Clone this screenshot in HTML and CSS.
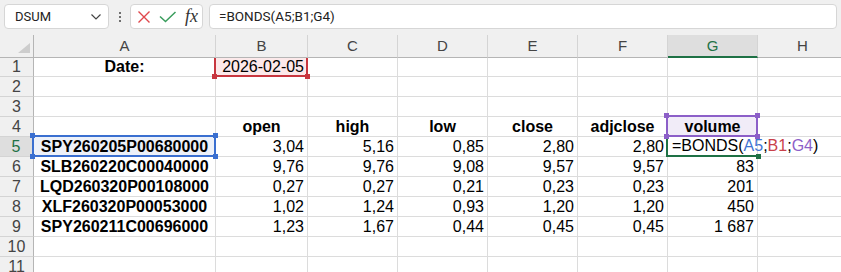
FILE: index.html
```html
<!DOCTYPE html>
<html>
<head>
<meta charset="utf-8">
<link rel="stylesheet" href="styles.css">
</head>
<body>
<div class="toolbar">
  <div class="namebox">
    <span class="nb-text">DSUM</span>
    <svg class="chev" width="12" height="8" viewBox="0 0 12 8"><path d="M1.5 1.5 L6 6 L10.5 1.5" fill="none" stroke="#444" stroke-width="1.2"/></svg>
  </div>
  <div class="dots"><span></span><span></span><span></span></div>
  <div class="actions">
    <svg class="ic-x" width="14" height="14" viewBox="0 0 14 14"><path d="M1.5 1.5 L12.5 12.5 M12.5 1.5 L1.5 12.5" stroke="#e0474c" stroke-width="1.4" fill="none"/></svg>
    <svg class="ic-ok" width="18" height="12" viewBox="0 0 18 12"><path d="M1 5.5 L6.5 10.5 L16.5 1" stroke="#3a9d5d" stroke-width="1.5" fill="none"/></svg>
    <span class="fx">fx</span>
  </div>
  <div class="formula">=BONDS(A5;B1;G4)</div>
</div>

<div class="colheads">
  <div class="ch corner"><svg class="tri" width="12" height="10" viewBox="0 0 12 10"><polygon points="12,0 12,10 0,10" fill="#cdcdcd"/></svg></div>
  <div class="ch">A</div>
  <div class="ch">B</div>
  <div class="ch">C</div>
  <div class="ch">D</div>
  <div class="ch">E</div>
  <div class="ch">F</div>
  <div class="ch sel">G</div>
  <div class="ch">H</div>
</div>

<div class="body">
  <div class="grid">
    <div class="rh">1</div><div class="c b">Date:</div><div class="c n hl-red">2026-02-05</div><div class="c"></div><div class="c"></div><div class="c"></div><div class="c"></div><div class="c"></div><div class="c"></div>
    <div class="rh">2</div><div class="c"></div><div class="c"></div><div class="c"></div><div class="c"></div><div class="c"></div><div class="c"></div><div class="c"></div><div class="c"></div>
    <div class="rh">3</div><div class="c"></div><div class="c"></div><div class="c"></div><div class="c"></div><div class="c"></div><div class="c"></div><div class="c"></div><div class="c"></div>
    <div class="rh">4</div><div class="c"></div><div class="c b">open</div><div class="c b">high</div><div class="c b">low</div><div class="c b">close</div><div class="c b">adjclose</div><div class="c b hl-purple">volume</div><div class="c"></div>
    <div class="rh sel">5</div><div class="c b hl-blue">SPY260205P00680000</div><div class="c n">3,04</div><div class="c n">5,16</div><div class="c n">0,85</div><div class="c n">2,80</div><div class="c n">2,80</div><div class="c"></div><div class="c"></div>
    <div class="rh">6</div><div class="c b">SLB260220C00040000</div><div class="c n">9,76</div><div class="c n">9,76</div><div class="c n">9,08</div><div class="c n">9,57</div><div class="c n">9,57</div><div class="c n">83</div><div class="c"></div>
    <div class="rh">7</div><div class="c b">LQD260320P00108000</div><div class="c n">0,27</div><div class="c n">0,27</div><div class="c n">0,21</div><div class="c n">0,23</div><div class="c n">0,23</div><div class="c n">201</div><div class="c"></div>
    <div class="rh">8</div><div class="c b">XLF260320P00053000</div><div class="c n">1,02</div><div class="c n">1,24</div><div class="c n">0,93</div><div class="c n">1,20</div><div class="c n">1,20</div><div class="c n">450</div><div class="c"></div>
    <div class="rh">9</div><div class="c b">SPY260211C00696000</div><div class="c n">1,23</div><div class="c n">1,67</div><div class="c n">0,44</div><div class="c n">0,45</div><div class="c n">0,45</div><div class="c n">1 687</div><div class="c"></div>
    <div class="rh">10</div><div class="c"></div><div class="c"></div><div class="c"></div><div class="c"></div><div class="c"></div><div class="c"></div><div class="c"></div><div class="c"></div>
    <div class="rh">11</div><div class="c"></div><div class="c"></div><div class="c"></div><div class="c"></div><div class="c"></div><div class="c"></div><div class="c"></div><div class="c"></div>
  </div>

  <div class="editor"><span>=BONDS(</span><span class="t-blue">A5</span><span>;</span><span class="t-red">B1</span><span>;</span><span class="t-purple">G4</span><span>)</span><i class="handle"></i></div>

  <div class="ref ref-red"><i class="k tl"></i><i class="k tr"></i><i class="k bl"></i><i class="k br"></i></div>
  <div class="ref ref-blue"><i class="k tl"></i><i class="k tr"></i><i class="k bl"></i><i class="k br"></i></div>
  <div class="ref ref-purple"><i class="k tl"></i><i class="k tr"></i><i class="k bl"></i><i class="k br"></i></div>
</div>
</body>
</html>
```
FILE: styles.css
```css
html, body {
  margin: 0;
  padding: 0;
}
body {
  width: 841px;
  height: 272px;
  overflow: hidden;
  background: #ffffff;
  font-family: "Liberation Sans", Arial, sans-serif;
  color: #000;
}

/* ---------- toolbar ---------- */
.toolbar {
  height: 35px;
  box-sizing: border-box;
  background: #f0f0f0;
  display: flex;
  align-items: flex-start;
  padding: 4px 4px 0 4px;
}
.namebox {
  width: 105px;
  height: 25px;
  box-sizing: border-box;
  background: #fff;
  border: 1px solid #d6d6d6;
  border-radius: 4px;
  display: flex;
  align-items: center;
  padding-left: 10px;
  padding-right: 6px;
  font-family: Roboto, "Liberation Sans", sans-serif;
  font-size: 13px;
  color: #222;
}
.nb-text { flex: 1; }
.chev { display: block; }
.dots {
  width: 21px;
  height: 25px;
  display: flex;
  flex-direction: column;
  align-items: center;
  justify-content: center;
  gap: 2px;
}
.dots span {
  width: 2px;
  height: 2px;
  border-radius: 1px;
  background: #444;
}
.actions {
  width: 73px;
  height: 25px;
  box-sizing: border-box;
  background: #fff;
  border: 1px solid #d6d6d6;
  border-radius: 4px;
  display: flex;
  align-items: center;
  padding-left: 6px;
}
.ic-x { display: block; margin-right: 8px; }
.ic-ok { display: block; margin-right: 8px; margin-top: 1px; }
.fx {
  font-family: "Liberation Serif", "Times New Roman", serif;
  font-style: italic;
  font-size: 18px;
  color: #333;
  line-height: 1;
  margin-top: -2px;
}
.formula {
  flex: 1;
  margin-left: 6px;
  height: 25px;
  box-sizing: border-box;
  background: #fff;
  border: 1px solid #d6d6d6;
  border-radius: 4px;
  padding-left: 9px;
  font-family: Roboto, "Liberation Sans", sans-serif;
  font-size: 13.5px;
  line-height: 23px;
  color: #222;
}

/* ---------- column headers ---------- */
.colheads {
  display: grid;
  grid-template-columns: 34px 182px 92px repeat(6, 90px);
  height: 22px;
  background: #f0f0f0;
  position: relative;
  z-index: 2;
}
.ch {
  box-sizing: border-box;
  border-right: 1px solid #d4d4d4;
  border-bottom: 1px solid #b5b5b5;
  text-align: center;
  font-size: 15px;
  line-height: 21px;
  color: #444;
}
.ch.corner {
  position: relative;
  border-right-color: #b5b5b5;
}
.tri {
  position: absolute;
  left: 18px;
  top: 8px;
}
.ch.sel {
  background: #dedede;
  color: #1e7145;
  border-bottom: 2px solid #1e7145;
}

/* ---------- body grid ---------- */
.body {
  position: relative;
  height: 215px;
  overflow: hidden;
}
.grid {
  display: grid;
  grid-template-columns: 34px 182px 92px repeat(6, 90px);
  grid-auto-rows: 20px;
}
.rh {
  box-sizing: border-box;
  background: #f0f0f0;
  border-right: 1px solid #b5b5b5;
  border-bottom: 1px solid #d4d4d4;
  text-align: center;
  font-size: 16px;
  line-height: 19px;
  color: #444;
}
.rh.sel {
  background: #dedede;
  color: #1e7145;
  border-right: 2px solid #1e7145;
}
.c {
  box-sizing: border-box;
  border-right: 1px solid #dcdcdc;
  border-bottom: 1px solid #dcdcdc;
  font-size: 16px;
  line-height: 19px;
  white-space: nowrap;
  overflow: hidden;
}
.c.b {
  font-weight: bold;
  text-align: center;
}
.c.n {
  text-align: right;
  padding-right: 3px;
}
.hl-red { background: #fce9ea; }
.hl-blue { background: #edf1f9; }
.hl-purple { background: #f1ecf8; }

/* ---------- overlays ---------- */
.editor {
  position: absolute;
  left: 666px;
  top: 78px;
  width: 92px;
  height: 22px;
  box-sizing: border-box;
  border-left: 2px solid #1e7145;
  border-bottom: 2px solid #1e7145;
  padding-left: 4px;
  font-size: 16px;
  line-height: 21px;
  white-space: nowrap;
  overflow: visible;
  z-index: 1;
}
.t-blue { color: #3f74d2; }
.t-red { color: #c9404a; }
.t-purple { color: #8c5fc8; }
.handle {
  position: absolute;
  right: -3px;
  bottom: -4px;
  width: 5px;
  height: 5px;
  background: #1e7145;
}
.ref {
  position: absolute;
  box-sizing: border-box;
  border: 2px solid;
  z-index: 1;
}
.ref-red { left: 214px; top: -2px; width: 94px; height: 22px; border-color: #c8363f; }
.ref-blue { left: 32px; top: 78px; width: 184px; height: 22px; border-color: #3a6fd0; }
.ref-purple { left: 666px; top: 58px; width: 92px; height: 22px; border-color: #8c5fc8; z-index: 2; }
.ref-red .k { background: #c8363f; }
.ref-blue .k { background: #3a6fd0; }
.ref-purple .k { background: #8c5fc8; }
.k {
  position: absolute;
  width: 5px;
  height: 5px;
}
.k.tl { left: -4px; top: -4px; }
.k.tr { right: -4px; top: -4px; }
.k.bl { left: -4px; bottom: -4px; }
.k.br { right: -4px; bottom: -4px; }
```
